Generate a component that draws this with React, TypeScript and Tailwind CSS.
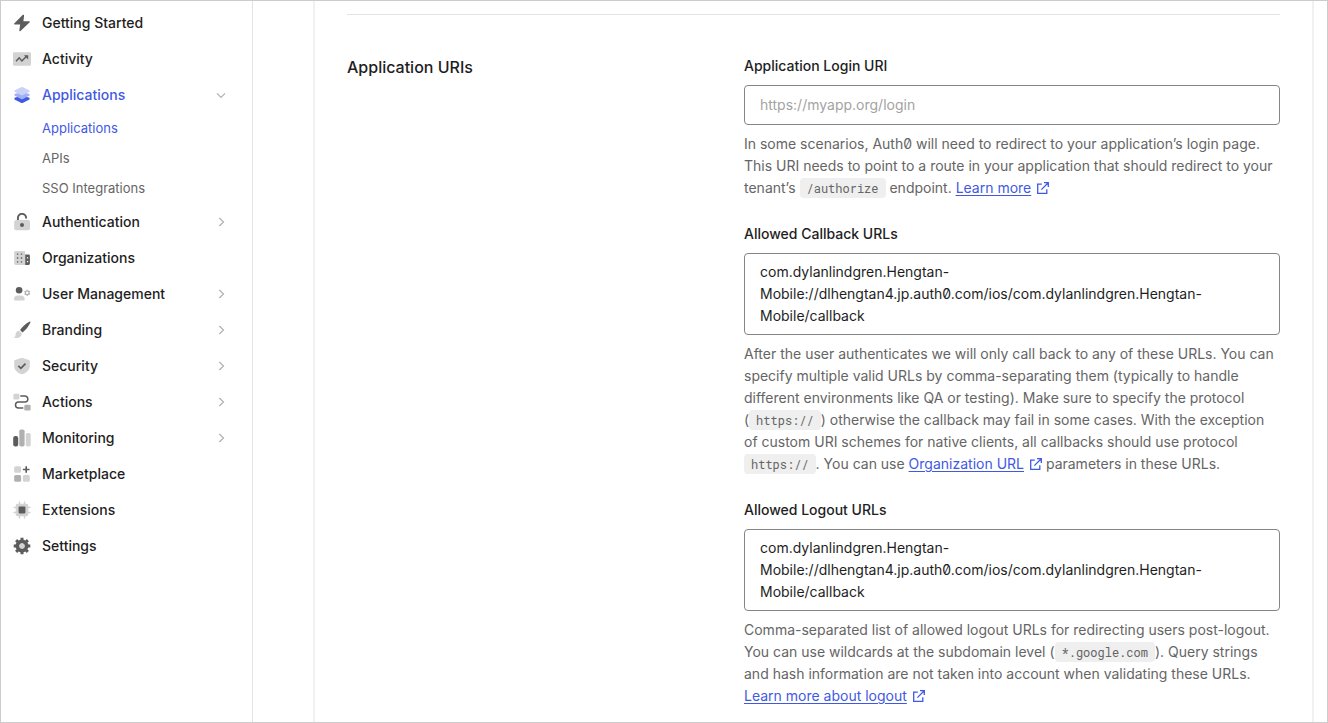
import { useId, type ReactNode } from "react";

const DARK = "#5c5c5c";
const MID = "#b0b0b0";
const LIGHT = "#d3d3d3";

function Icon({ children }: { children: ReactNode }) {
  return (
    <svg width="18" height="18" viewBox="0 0 18 18" fill="none" aria-hidden="true" className="shrink-0">
      {children}
    </svg>
  );
}

const icons = {
  bolt: (
    <Icon>
      <path d="M9.600.900 1.200 9.500a.600.600 0 0 0 .4 1h5.600L6.300 16.400c-.1.800.7 1.100 1.200.6l9.200-8.800a.600.600 0 0 0-.4-1h-5.900l.7-5.600c.1-.8-.9-1.300-1.500-.7Z" fill={DARK} />
    </Icon>
  ),
  activity: (
    <Icon>
      <rect x="0" y="2.200" width="18" height="13.600" rx="1.200" fill={LIGHT} />
      <path d="m3 11.200 3.200-3.300 2.700 3 4.800-4.900" stroke={DARK} strokeWidth="1.400" />
      <path d="M10.900 5.200h4.300v4.300Z" fill={DARK} />
    </Icon>
  ),
  layers: (
    <Icon>
      <path d="m1.500 11.800 7.500-2 7.500 2v1.700L10 16.800a2 2 0 0 1-2 0l-6.500-3.300Z" fill="#3f59e4" />
      <path d="m1.500 8 7.500-2 7.500 2v1.600L10 12.900a2 2 0 0 1-2 0L1.500 9.600Z" fill="#a3b0f2" />
      <path d="M8 1.200a2.300 2.300 0 0 1 2 0l6.500 3.200v1.300L10 9a2.300 2.300 0 0 1-2 0L1.500 5.700V4.400Z" fill="#cbd2f8" />
    </Icon>
  ),
  lock: (
    <Icon>
      <path d="M4.900 7.200V5a4.100 4.100 0 0 1 8.200-.2" stroke={DARK} strokeWidth="1.900" strokeLinecap="round" />
      <rect x="1.200" y="6.900" width="15.800" height="10.300" rx="2" fill={LIGHT} />
      <circle cx="9" cy="12.100" r="2" fill={DARK} />
    </Icon>
  ),
  building: (
    <Icon>
      <path d="M2.700 2h8.100c.8 0 1.300.5 1.300 1.300V16H2.700c-.9 0-1.500-.6-1.500-1.400V3.400C1.200 2.600 1.800 2 2.700 2Z" fill={LIGHT} />
      <path d="M12.200 5.400h3.300c.8 0 1.400.6 1.400 1.400v7.800c0 .8-.6 1.400-1.400 1.400h-3.300Z" fill={DARK} />
      <path d="M3.900 4.400h1.400v1.400H3.900Zm3.900 0h1.400v1.400H7.800ZM3.900 8.300h1.400v1.400H3.900Zm3.900 0h1.400v1.400H7.800Zm-3.900 3.900h1.400v1.400H3.900Zm3.900 0h1.400v1.400H7.800Z" fill={DARK} />
      <path d="M13.900 8.300h1.300v1.300h-1.300Zm0 3.600h1.300v1.300h-1.300Z" fill="#fff" />
    </Icon>
  ),
  user: (
    <Icon>
      <circle cx="6.100" cy="5.200" r="3.300" fill={DARK} />
      <path d="M.9 14.200c0-2.600 1.700-3.800 3.900-3.800h3c2.200 0 3.900 1.200 3.900 3.800 0 .8-.4 1.200-1.200 1.200H2.100c-.8 0-1.200-.4-1.200-1.200Z" fill={LIGHT} />
      <circle cx="14.200" cy="7.800" r="1.900" stroke={MID} strokeWidth="1.200" />
      <path d="M14.200 4.700v1.100m0 4v1.100M11.500 6.200l1 .6m3.400 2 1 .6m0-3.200-1 .6m-3.400 2-1 .6" stroke={MID} strokeWidth="1.100" />
    </Icon>
  ),
  brush: (
    <Icon>
      <path d="M16.400.7c.7-.3 1.300.3.900 1-1.700 3.500-4.200 7-7.800 9.900L7 9c2.700-3.700 5.700-6.600 9.400-8.300Z" fill={DARK} />
      <path d="M6 9.700 8.700 12.300c.7 2.700-2.400 5.300-7.200 4.700-.4-.1-.5-.5-.1-.7 1.400-.7 1-2.100 1.300-3.600.3-1.700 1.600-2.900 3.300-3Z" fill={LIGHT} />
    </Icon>
  ),
  shield: (
    <Icon>
      <path d="M8.200 1.100a2.200 2.200 0 0 1 1.600 0l6.100 2c.6.200.9.600.9 1.200v4.500c0 3.900-2.700 6.800-7 8.300a2.400 2.400 0 0 1-1.600 0c-4.300-1.500-7-4.400-7-8.300V4.300c0-.6.300-1 .9-1.200Z" fill={LIGHT} />
      <path d="m5.300 8.900 2.600 2.500 4.600-4.700" stroke={DARK} strokeWidth="1.700" />
    </Icon>
  ),
  flow: (
    <Icon>
      <rect x=".4" y="0.800" width="6" height="5.700" rx="1.200" fill={LIGHT} />
      <rect x="11.300" y="11.700" width="6.300" height="5.700" rx="1.200" fill={MID} />
      <path d="M7.800 3h4.100a2.900 2.900 0 0 1 0 5.900H5.500a3 3 0 0 0 0 6h4.300" stroke={DARK} strokeWidth="1.500" strokeLinecap="round" />
    </Icon>
  ),
  bars: (
    <Icon>
      <rect x=".2" y="7" width="5" height="10.400" rx="2" fill={DARK} />
      <rect x="6.300" y=".6" width="5.300" height="16.800" rx="1.700" fill={MID} />
      <rect x="12.800" y="3.900" width="4.900" height="13.500" rx="1.700" fill={LIGHT} />
    </Icon>
  ),
  market: (
    <Icon>
      <rect x="1.200" y="1.200" width="6.900" height="6.600" rx="1.500" fill={LIGHT} />
      <rect x="1.200" y="9.900" width="6.900" height="6.800" rx="1.500" fill={MID} />
      <rect x="9.900" y="9.900" width="6.900" height="6.800" rx="1.500" fill={LIGHT} />
      <path d="M13.200 1.200v6.600M9.900 4.500h6.600" stroke={DARK} strokeWidth="1.600" />
    </Icon>
  ),
  chip: (
    <Icon>
      <rect x="2.700" y="2.700" width="12.600" height="12.600" rx="2" fill={LIGHT} />
      <path d="M6.500 1v16M11.500 1v16M1 6.500h16M1 11.500h16" stroke={LIGHT} strokeWidth="1.400" strokeLinecap="round" />
      <rect x="5.600" y="5.600" width="6.800" height="6.800" rx=".8" fill={DARK} />
    </Icon>
  ),
  gear: (
    <Icon>
      <circle cx="9" cy="9" r="4.500" stroke={DARK} strokeWidth="4" />
      <path
        d="M9 .7v3M9 14.300v3M.7 9h3M14.300 9h3M3.130 3.130l2.100 2.100M12.770 12.770l2.100 2.100M3.130 14.870l2.100-2.100M12.770 5.230l2.100-2.100"
        stroke={DARK}
        strokeWidth="3"
      />
      <circle cx="9" cy="9" r="2.700" fill={LIGHT} />
    </Icon>
  ),
};

type NavEntry = {
  label: string;
  icon: ReactNode;
  expandable?: boolean;
  children?: string[];
};

const navigation: NavEntry[] = [
  { label: "Getting Started", icon: icons.bolt },
  { label: "Activity", icon: icons.activity },
  { label: "Applications", icon: icons.layers, children: ["Applications", "APIs", "SSO Integrations"] },
  { label: "Authentication", icon: icons.lock, expandable: true },
  { label: "Organizations", icon: icons.building },
  { label: "User Management", icon: icons.user, expandable: true },
  { label: "Branding", icon: icons.brush, expandable: true },
  { label: "Security", icon: icons.shield, expandable: true },
  { label: "Actions", icon: icons.flow, expandable: true },
  { label: "Monitoring", icon: icons.bars, expandable: true },
  { label: "Marketplace", icon: icons.market },
  { label: "Extensions", icon: icons.chip },
  { label: "Settings", icon: icons.gear },
];

function Chevron({ open }: { open: boolean }) {
  return (
    <svg width="10" height="10" viewBox="0 0 10 10" fill="none" stroke="#b0b0b0" strokeWidth="1.200" aria-hidden="true" className="shrink-0">
      <path d={open ? "M1 3.300 5 7.300 9 3.300" : "M3.300 1 7.500 5 3.300 9"} />
    </svg>
  );
}

function NavItem({ entry }: { entry: NavEntry }) {
  const open = entry.children !== undefined;
  const rowClass = open
    ? "flex h-9 w-full items-center gap-[11px] text-left text-[#3f59e4]"
    : "flex h-9 w-full items-center gap-[11px] text-left text-[#1e1e1e]";
  const content = (
    <>
      {entry.icon}
      <span className="flex-1">{entry.label}</span>
      {(open || entry.expandable) && <Chevron open={open} />}
    </>
  );
  return (
    <li>
      {open || entry.expandable ? (
        <button type="button" aria-expanded={open} className={rowClass}>
          {content}
        </button>
      ) : (
        <a href="#" className={rowClass}>
          {content}
        </a>
      )}
      {entry.children && (
        <ul className="pb-px pl-[29px] text-[13px] font-normal">
          {entry.children.map((child, i) => (
            <li key={child}>
              <a href="#" className={i === 0 ? "flex h-[30px] items-center text-[#3f59e4]" : "flex h-[30px] items-center text-[#656565]"}>
                {child}
              </a>
            </li>
          ))}
        </ul>
      )}
    </li>
  );
}

function Code({ children }: { children: ReactNode }) {
  return (
    <code className="inline-block rounded bg-[#efefef] px-[7px] py-0.5 font-['Roboto_Mono','Liberation_Mono',monospace] text-xs leading-4">
      {children}
    </code>
  );
}

function ExternalLink({ children }: { children: ReactNode }) {
  return (
    <a href="#" className="whitespace-nowrap text-[#3f59e4]">
      <span className="underline underline-offset-2">{children}</span>
      <svg width="12" height="12" viewBox="0 0 12 12" fill="none" stroke="currentColor" strokeWidth="1.300" aria-hidden="true" className="ml-1.5 inline-block align-[-1px]">
        <path d="M4.800 2.200H.700v9.100h9.100V7.200M7 .700h4.300V5M11.200.800 4.400 7.600" />
      </svg>
    </a>
  );
}

const CALLBACK =
  "com.dylanlindgren.Hengtan-Mobile://dlhengtan4.jp.auth0.com/ios/com.dylanlindgren.Hengtan-Mobile/callback";

function Field({ label, value, placeholder, help }: { label: string; value?: string; placeholder?: string; help: ReactNode }) {
  const id = useId();
  return (
    <div className="flex flex-col gap-2">
      <label htmlFor={id} className="font-medium text-[#1e1e1e]">
        {label}
      </label>
      {value ? (
        <textarea
          id={id}
          rows={3}
          defaultValue={value}
          className="block w-full resize-none overflow-hidden rounded border border-[#858585] bg-white px-[15px] py-[7px] text-[#1e1e1e] outline-none"
        />
      ) : (
        <input
          id={id}
          type="text"
          placeholder={placeholder}
          className="block h-10 w-full rounded border border-[#858585] bg-white px-[15px] pb-0.5 text-[#1e1e1e] outline-none placeholder:text-[#a3a3a3]"
        />
      )}
      <p>{help}</p>
    </div>
  );
}

export default function App() {
  return (
    <div className="flex min-h-screen border border-[#cccccc] bg-white font-['Inter',sans-serif] text-sm leading-[22px] text-[#656565] [font-feature-settings:'zero']">
      <nav aria-label="Main" className="w-[252px] shrink-0 border-r border-[#e3e3e3] pt-1 pr-[26px] pl-3">
        <ul className="font-medium">
          {navigation.map((entry) => (
            <NavItem key={entry.label} entry={entry} />
          ))}
        </ul>
      </nav>
      <main className="flex min-w-0 flex-1 pr-[13px] pl-[60px]">
        <div className="flex-1 border-x-2 border-[#f1f1f1] px-8 pt-[13px]">
          <section className="grid grid-cols-[373fr_536fr] gap-x-6 border-t border-[#e3e3e3] pt-10 pb-3.5">
            <h2 className="pt-px text-base leading-[22px] font-medium text-[#1e1e1e]">Application URIs</h2>
            <div className="flex min-w-0 flex-col gap-6">
              <Field
                label="Application Login URI"
                placeholder="https://myapp.org/login"
                help={
                  <>
                    In some scenarios, Auth0 will need to redirect to your application’s login page. This URI needs to
                    point to a route in your application that should redirect to your tenant’s <Code>/authorize</Code>{" "}
                    endpoint. <ExternalLink>Learn more</ExternalLink>
                  </>
                }
              />
              <Field
                label="Allowed Callback URLs"
                value={CALLBACK}
                help={
                  <>
                    After the user authenticates we will only call back to any of these URLs. You can specify multiple
                    valid URLs by comma-separating them (typically to handle different environments like QA or testing).
                    Make sure to specify the protocol{" "}
                    <span className="whitespace-nowrap">
                      (<Code>https://</Code>)
                    </span>{" "}
                    otherwise the callback may fail in some cases. With the exception of&nbsp;custom URI schemes for
                    native clients, all callbacks should use protocol{" "}
                    <span className="whitespace-nowrap">
                      <Code>https://</Code>.
                    </span>{" "}
                    You can use <ExternalLink>Organization URL</ExternalLink> parameters in these URLs.
                  </>
                }
              />
              <Field
                label="Allowed Logout URLs"
                value={CALLBACK}
                help={
                  <>
                    Comma-separated list of allowed logout URLs for redirecting users post-logout. You can use wildcards
                    at the subdomain level{" "}
                    <span className="whitespace-nowrap">
                      (<Code>*.google.com</Code>).
                    </span>{" "}
                    Query strings and hash information are not taken into account when validating these URLs.{" "}
                    <ExternalLink>Learn more about logout</ExternalLink>
                  </>
                }
              />
            </div>
          </section>
        </div>
      </main>
    </div>
  );
}
